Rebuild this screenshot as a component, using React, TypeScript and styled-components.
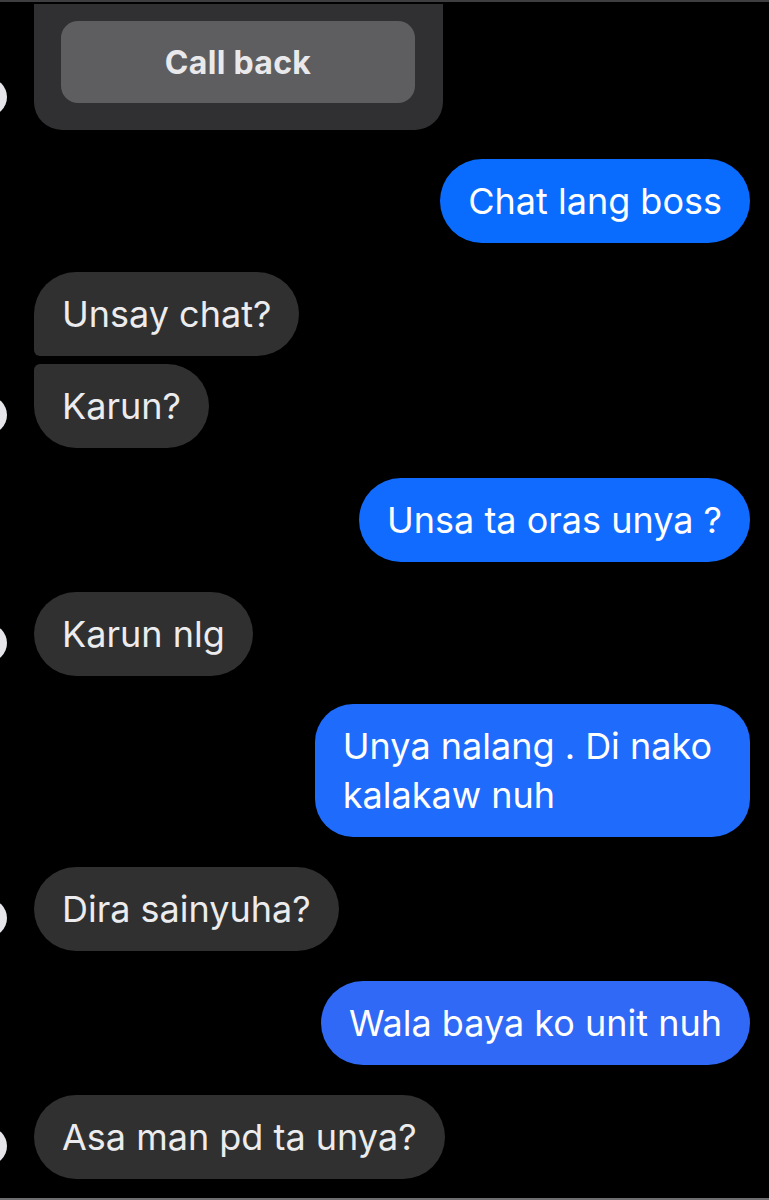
import React from "react";
import styled, { createGlobalStyle } from "styled-components";

const Global = createGlobalStyle`
  html, body { margin: 0; padding: 0; background: #000; }
  body { font-family: Inter, "Helvetica Neue", Arial, sans-serif; -webkit-font-smoothing: antialiased; }
`;

const Screen = styled.div`
  width: 769px;
  height: 1200px;
  box-sizing: border-box;
  background: #000;
  border-top: 2px solid #3e3e40;
  border-bottom: 2px solid #6e6e70;
  overflow: hidden;
  display: flex;
  flex-direction: column;
  padding: 2px 19px 0 0;
`;

const Row = styled.div<{ $side: "in" | "out"; $gap: number }>`
  display: flex;
  align-items: flex-end;
  justify-content: ${(p) => (p.$side === "out" ? "flex-end" : "flex-start")};
  margin-top: ${(p) => p.$gap}px;
`;

const Avatar = styled.div<{ $show?: boolean }>`
  flex: none;
  width: 38px;
  height: 38px;
  border-radius: 50%;
  background: ${(p) => (p.$show ? "#e6e6ea" : "transparent")};
  margin-left: -31px;
  margin-right: 27px;
  margin-bottom: 14px;
`;

const CallCard = styled.div`
  width: 409px;
  box-sizing: border-box;
  background: #303032;
  border-radius: 0 0 28px 28px;
  padding: 17px 28px 27px 27px;
`;

const CallButton = styled.div`
  height: 82px;
  border-radius: 17px;
  background: #5e5e60;
  display: flex;
  align-items: center;
  justify-content: center;
  color: #e9e9eb;
  font-size: 32px;
  font-weight: 700;
  letter-spacing: 0.3px;
`;

const Bubble = styled.div<{ $bg: string; $radius: string; $light?: boolean; $padR: number }>`
  box-sizing: border-box;
  max-width: 440px;
  background: ${(p) => p.$bg};
  border-radius: ${(p) => p.$radius};
  color: ${(p) => (p.$light ? "#ececee" : "#fff")};
  font-size: 36px;
  line-height: 49px;
  padding: 18px ${(p) => p.$padR}px 17px 28px;
  white-space: pre-line;
`;

const GRAY = "#303030";
const full = "42px";

type Msg = {
  side: "in" | "out";
  text: string;
  gap: number;
  bg?: string;
  radius?: string;
  avatar?: boolean;
  padR?: number;
};

const messages: Msg[] = [
  { side: "out", text: "Chat lang boss", gap: 29, bg: "#0a6cff" },
  { side: "in", text: "Unsay chat?", gap: 29, radius: "42px 42px 42px 6px" },
  { side: "in", text: "Karun?", gap: 8, radius: "6px 42px 42px 42px", avatar: true },
  { side: "out", text: "Unsa ta oras unya ?", gap: 30, bg: "#126bff" },
  { side: "in", text: "Karun nlg", gap: 30, avatar: true },
  { side: "out", text: "Unya nalang . Di nako\nkalakaw nuh", gap: 28, bg: "#1f6bfb", radius: "38px", padR: 38 },
  { side: "in", text: "Dira sainyuha?", gap: 30, avatar: true },
  { side: "out", text: "Wala baya ko unit nuh", gap: 30, bg: "#2f69f6" },
  { side: "in", text: "Asa man pd ta unya?", gap: 30, avatar: true },
];

export default function App() {
  return (
    <>
      <Global />
      <Screen>
        <Row $side="in" $gap={0}>
          <Avatar $show />
          <CallCard>
            <CallButton>Call back</CallButton>
          </CallCard>
        </Row>
        {messages.map((m, i) => (
          <Row key={i} $side={m.side} $gap={m.gap}>
            {m.side === "in" && <Avatar $show={m.avatar} />}
            <Bubble
              $bg={m.bg ?? GRAY}
              $radius={m.radius ?? full}
              $light={!m.bg}
              $padR={m.padR ?? 28}
            >
              {m.text}
            </Bubble>
          </Row>
        ))}
      </Screen>
    </>
  );
}
